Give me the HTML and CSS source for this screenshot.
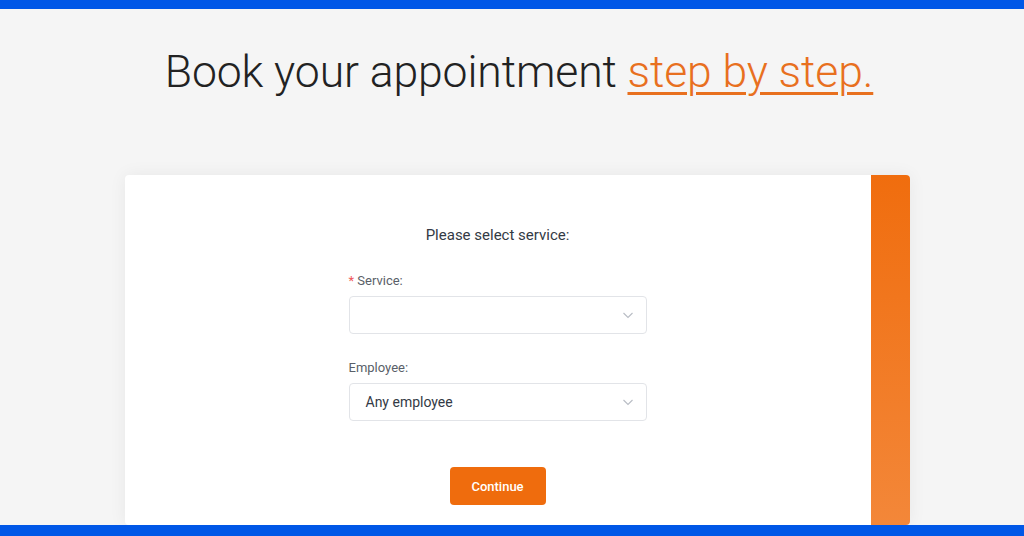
FILE: index.html
```html
<!DOCTYPE html>
<html lang="en">
<head>
  <meta charset="utf-8">
  <title>Book your appointment</title>
  <link rel="stylesheet" href="styles.css">
</head>
<body>
<div class="bar"></div>
<div class="page">
  <h1 class="title">Book your appointment <span class="accent">step by step.</span></h1>
  <div class="card">
    <div class="card-body">
      <div class="form">
        <div class="form-title">Please select service:</div>
        <div class="field">
          <label class="label"><span class="req">*</span> Service:</label>
          <div class="select">
            <span class="value"></span>
            <svg class="arrow" width="12" height="12" viewBox="0 0 12 12"><path d="M1.5 4l4.5 4.5 4.5-4.5" fill="none" stroke="#b8bcc4" stroke-width="1.1"/></svg>
          </div>
        </div>
        <div class="field">
          <label class="label">Employee:</label>
          <div class="select">
            <span class="value">Any employee</span>
            <svg class="arrow" width="12" height="12" viewBox="0 0 12 12"><path d="M1.5 4l4.5 4.5 4.5-4.5" fill="none" stroke="#b8bcc4" stroke-width="1.1"/></svg>
          </div>
        </div>
        <div class="actions">
          <button class="btn" type="button">Continue</button>
        </div>
      </div>
    </div>
    <div class="card-side"></div>
  </div>
</div>
<div class="bar bar-bottom"></div>
</body>
</html>
```

FILE: styles.css
```css
body {
  margin: 0;
  background-color: #f5f5f5;
  font-family: Roboto, "Liberation Sans", sans-serif;
  height: 536px;
  overflow: hidden;
}

.bar {
  height: 9px;
  background-color: #0057e7;
}

.bar-bottom {
  height: 11px;
}

.page {
  height: 516px;
  overflow: hidden;
  display: flex;
  flex-direction: column;
  align-items: center;
}

.title {
  margin: 35px 0 0;
  font-size: 44.5px;
  font-weight: 300;
  color: #222;
  line-height: 56px;
  letter-spacing: -0.1px;
  margin-left: 14px;
}

.accent {
  color: #e8701f;
  text-decoration: underline;
  text-decoration-thickness: 3px;
  text-underline-offset: 5px;
}

.card {
  margin-top: 75px;
  margin-left: 10px;
  width: 785px;
  height: 400px;
  display: flex;
  background: #fff;
  border-radius: 4px;
  box-shadow: 0 0 18px rgba(0, 0, 0, 0.06);
}

.card-body {
  flex: 1;
  display: flex;
  justify-content: center;
}

.card-side {
  width: 39px;
  background: linear-gradient(#f06d0e, #f38739);
  border-radius: 0 4px 4px 0;
}

.form {
  width: 298px;
  padding-top: 51px;
}

.form-title {
  text-align: center;
  font-size: 15px;
  color: #333a45;
  margin-bottom: 29px;
}

.field {
  margin-bottom: 26px;
}

.label {
  display: block;
  font-size: 13px;
  color: #5a5f69;
  margin-bottom: 8px;
}

.req {
  color: #f0595a;
}

.select {
  height: 38px;
  border: 1px solid #e2e4e8;
  border-radius: 4px;
  box-sizing: border-box;
  display: flex;
  align-items: center;
  justify-content: space-between;
  padding: 0 12px 0 16px;
}

.value {
  font-size: 14px;
  color: #333a45;
}

.actions {
  display: flex;
  justify-content: center;
  padding-top: 20px;
}

.btn {
  width: 96px;
  height: 38px;
  border: 0;
  border-radius: 4px;
  background: #ef6c0d;
  color: #fff;
  font-family: Roboto, "Liberation Sans", sans-serif;
  font-size: 13px;
  font-weight: 500;
}
```
